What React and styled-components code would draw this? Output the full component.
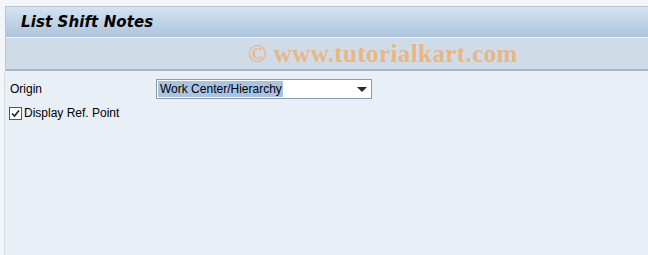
import styled, { createGlobalStyle } from 'styled-components';

const Global = createGlobalStyle`
  html, body {
    margin: 0;
    padding: 0;
    background: #f2f5f9;
  }
  body {
    font-family: "Liberation Sans", Arial, sans-serif;
  }
`;

const Screen = styled.div`
  width: 648px;
  height: 255px;
  display: flex;
  flex-direction: column;
  padding-top: 6px;
  box-sizing: border-box;
  overflow: hidden;
`;

const Header = styled.div`
  margin-left: 5px;
  border-top: 1px solid #b9c5d3;
  border-left: 1px solid #b9c5d3;
`;

const TitleBar = styled.div`
  height: 30px;
  background: linear-gradient(#d6e2ef, #adc5dd);
  border-bottom: 1px solid #f4f8fb;
  display: flex;
  align-items: center;
  padding-left: 15px;
`;

const Title = styled.h1`
  margin: 0;
  font-family: "DejaVu Sans", Verdana, sans-serif;
  font-size: 15px;
  font-weight: bold;
  font-style: italic;
  color: #000;
  letter-spacing: 0.1px;
`;

const Toolbar = styled.div`
  height: 31px;
  background: #cfdce8;
  border-bottom: 2px solid #a9b5c4;
  display: flex;
  align-items: center;
  padding-left: 242px;
`;

const Watermark = styled.span`
  font-family: "Liberation Serif", "Times New Roman", serif;
  font-size: 25px;
  font-weight: bold;
  color: #e9b684;
  letter-spacing: 0.4px;
`;

const Body = styled.div`
  flex: 1;
  margin-left: 4px;
  border-left: 1px solid #d6dde6;
  background: #e9eff7;
  padding: 8px 0 0 5px;
  display: flex;
  flex-direction: column;
  gap: 4px;
`;

const Row = styled.div`
  display: flex;
  align-items: center;
  height: 20px;
`;

const Label = styled.span`
  width: 146px;
  font-size: 12px;
  color: #000;
`;

const Select = styled.div`
  width: 209px;
  height: 18px;
  background: #fff;
  border: 1px solid #8e9aa8;
  display: flex;
  align-items: center;
  justify-content: space-between;
  padding: 0 4px 0 1px;
`;

const Selected = styled.span`
  background: #a9c4e2;
  color: #000;
  font-size: 12px;
  padding: 1px 1px 1px 2px;
  line-height: 14px;
`;

const Arrow = styled.span`
  width: 0;
  height: 0;
  border-left: 5px solid transparent;
  border-right: 5px solid transparent;
  border-top: 5px solid #1a2a4a;
`;

const Check = styled.span`
  width: 11px;
  height: 11px;
  border: 1px solid #555;
  background: #fff;
  display: flex;
  align-items: center;
  justify-content: center;
  margin-right: 2px;
  margin-left: -1px;
`;

const CheckLabel = styled.span`
  font-size: 12px;
  color: #000;
`;

export default function App() {
  return (
    <Screen>
      <Global />
      <Header>
        <TitleBar>
          <Title>List Shift Notes</Title>
        </TitleBar>
        <Toolbar>
          <Watermark>© www.tutorialkart.com</Watermark>
        </Toolbar>
      </Header>
      <Body>
        <Row>
          <Label>Origin</Label>
          <Select>
            <Selected>Work Center/Hierarchy</Selected>
            <Arrow />
          </Select>
        </Row>
        <Row>
          <Check>
            <svg width="9" height="9" viewBox="0 0 9 9">
              <path d="M1 4.5 L3.5 7 L8 1.5" fill="none" stroke="#222" strokeWidth="1.6" />
            </svg>
          </Check>
          <CheckLabel>Display Ref. Point</CheckLabel>
        </Row>
      </Body>
    </Screen>
  );
}
